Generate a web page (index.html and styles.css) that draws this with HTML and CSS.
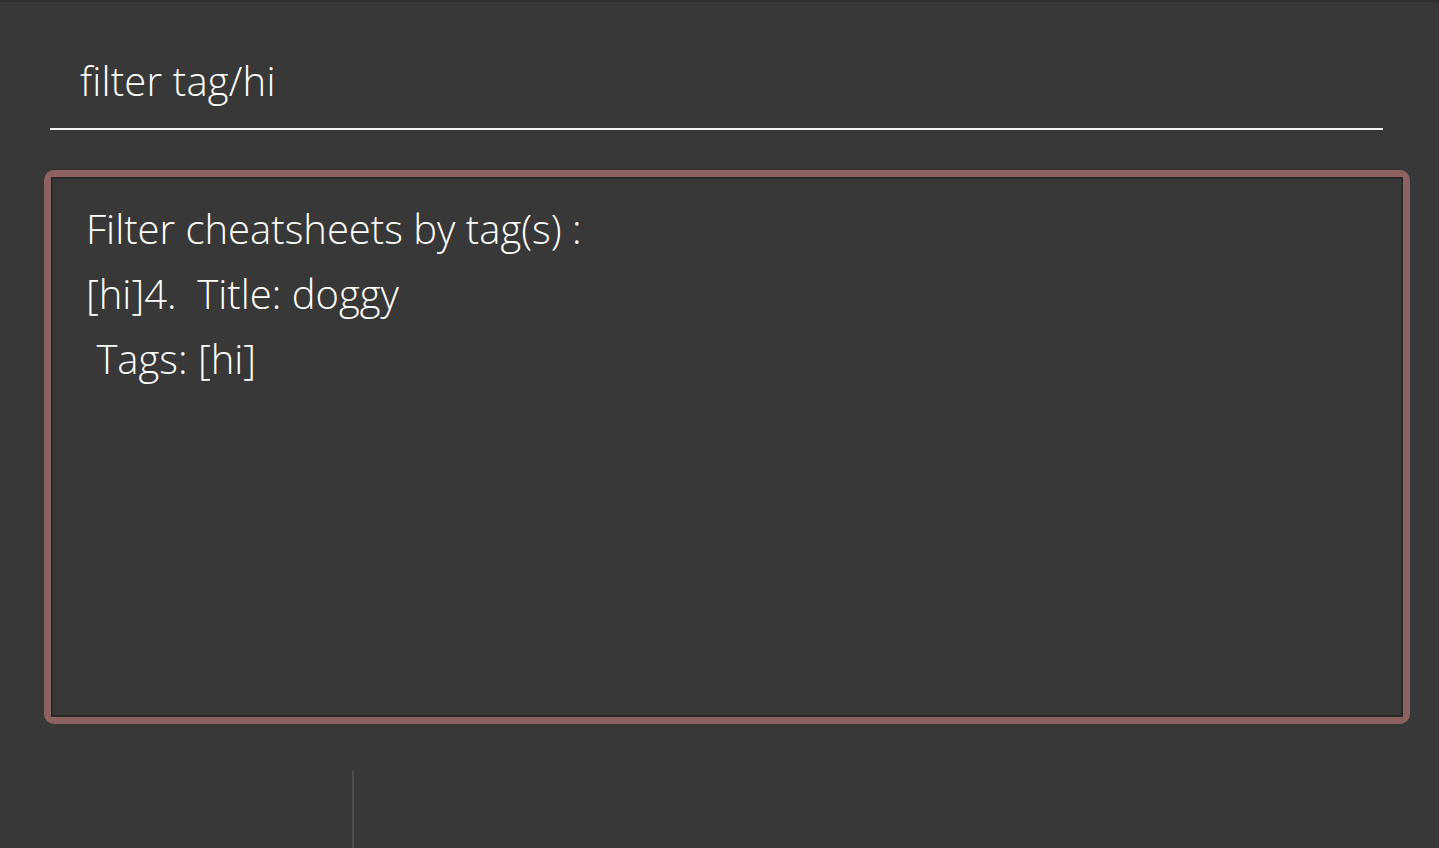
FILE: index.html
```html
<!DOCTYPE html>
<html>
<head>
<meta charset="utf-8">
<link rel="stylesheet" href="styles.css">
</head>
<body>
<div class="app">
  <div class="command">
    <div class="command-text">filter tag/hi</div>
  </div>
  <div class="result">
    <div class="result-inner">
      <div class="line">Filter cheatsheets by tag(s) :</div>
      <div class="line">[hi]4.&nbsp; Title: doggy</div>
      <div class="line">&nbsp;Tags: [hi]</div>
    </div>
  </div>
  <div class="bottom">
    <div class="left-pane"></div>
    <div class="right-pane"></div>
  </div>
</div>
</body>
</html>
```
FILE: styles.css
```css
html, body {
  margin: 0;
  padding: 0;
  background: #383838;
  height: 100%;
}
body {
  font-family: "Open Sans", "Noto Sans", sans-serif;
  font-weight: 300;
  color: #ffffff;
  overflow: hidden;
}
.app {
  height: 848px;
  border-top: 2px solid #2e2e2e;
  box-sizing: border-box;
  display: flex;
  flex-direction: column;
}
.command {
  margin: 0 56px 0 50px;
  height: 128px;
  box-sizing: border-box;
  border-bottom: 2px solid #f4f4f4;
  padding: 49px 0 0 30px;
}
.command-text {
  font-size: 40px;
  line-height: 60px;
  letter-spacing: 0.2px;
}
.result {
  margin: 40px 29px 0 44px;
  height: 554px;
  box-sizing: border-box;
  border: 7px solid #8f6262;
  border-radius: 10px;
}
.result-inner {
  height: 100%;
  box-sizing: border-box;
  box-shadow: inset 2px 2px 0 #2a2a2a, inset -2px -2px 0 #2a2a2a;
  padding: 19px 35px;
}
.line {
  font-size: 40px;
  line-height: 65px;
  letter-spacing: 0;
  white-space: pre;
}
.bottom {
  flex: 1;
  display: flex;
  margin-top: 47px;
}
.left-pane {
  width: 352px;
  border-right: 2px solid #4e4e4e;
}
.right-pane {
  flex: 1;
}
```
